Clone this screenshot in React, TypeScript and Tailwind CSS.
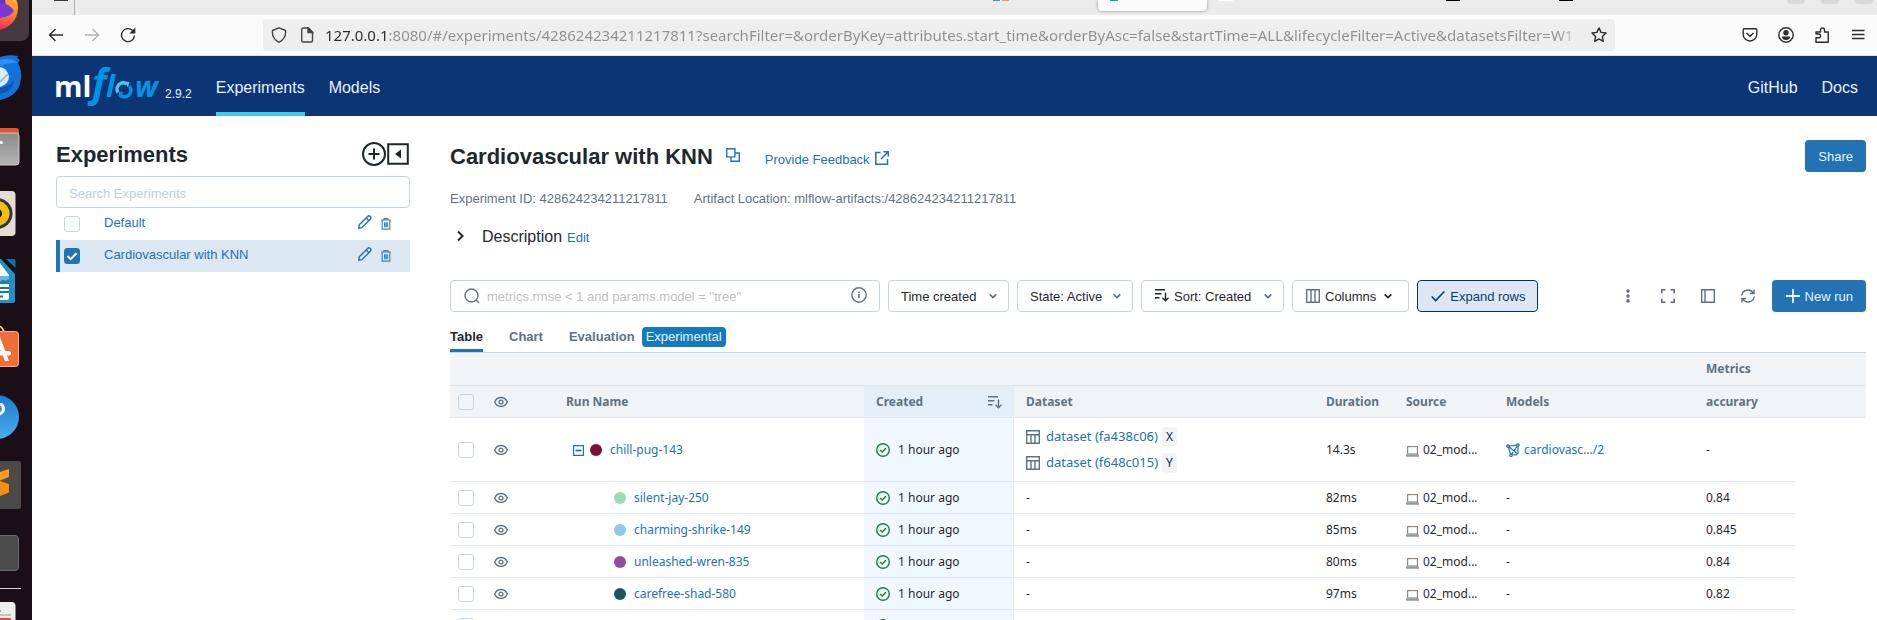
import React, { useState } from "react";

type IconProps = { className?: string; children: React.ReactNode; box?: string };

function Icon({ className = "size-3.5", children, box = "0 0 14 14" }: IconProps) {
  return (
    <svg
      viewBox={box}
      className={`shrink-0 ${className}`}
      fill="none"
      stroke="currentColor"
      strokeWidth="1.4"
      aria-hidden="true"
    >
      {children}
    </svg>
  );
}

const EyeIcon = () => (
  <Icon className="size-3.5 text-[#5f7281]">
    <path d="M.7 7C2 4 4.300 2.500 7 2.500S12 4 13.300 7C12 10 9.700 11.500 7 11.500S2 10 .7 7Z" />
    <circle cx="7" cy="7" r="1.900" />
  </Icon>
);

const SortIcon = ({ className }: { className?: string }) => (
  <Icon className={className}>
    <path d="M0 1.700h10M0 5.700h6.500M0 9.700h4.500M10.500 4.500v8M7.500 9.700l3 3 3-3" />
  </Icon>
);

const ChevronIcon = ({ className = "" }: { className?: string }) => (
  <Icon className={`h-2 w-2 ${className}`} box="0 0 8 8">
    <path d="M.7 2.300 4 5.500l3.300-3.200" strokeWidth="1.700" />
  </Icon>
);

const CheckCircleIcon = () => (
  <Icon className="size-3.5 text-[#277c43]">
    <circle cx="7" cy="7" r="6.300" />
    <path d="M4.200 7.100 6.200 9l3.700-3.700" />
  </Icon>
);

const TableIcon = () => (
  <Icon className="size-3.5 text-[#5f7281]">
    <path d="M.7.7h12.600v12.600H.7zM.7 4.700h12.600M5 4.700v8.600M9 4.700v8.600" />
  </Icon>
);

const LaptopIcon = () => (
  <svg viewBox="0 0 13 11" className="mt-1 h-[11px] w-[13px] shrink-0" aria-hidden="true">
    <rect x="1.600" y=".6" width="9.800" height="7.400" fill="none" stroke="#8c8c8c" strokeWidth="1.200" />
    <path d="M0 8.500h13v1.700q0 .6-.6.6H.6q-.6 0-.6-.6z" fill="#999" />
  </svg>
);

const ModelIcon = () => (
  <Icon className="size-3.5">
    <path d="M3 3 11 2.200M2.200 4l2.500 7.300M3 3.700l8.300 7.100M12 3.200v7.500M11.200 3 5.700 11.200M6.200 12l5.300-.4" strokeWidth="1.200" />
    <circle cx="1.900" cy="3" r="1.200" fill="#fff" strokeWidth="1.200" />
    <circle cx="12" cy="2" r="1.200" fill="#fff" strokeWidth="1.200" />
    <circle cx="5" cy="12.300" r="1.200" fill="#fff" strokeWidth="1.200" />
  </Icon>
);

function Checkbox({ label, checked = false }: { label: string; checked?: boolean }) {
  const [on, setOn] = useState(checked);
  return (
    <span className="grid size-4 shrink-0">
      <input
        type="checkbox"
        aria-label={label}
        checked={on}
        onChange={() => setOn(!on)}
        className="col-start-1 row-start-1 size-4 appearance-none rounded-[3px] border border-[#c5d4e3] checked:border-[#2272b4] checked:bg-[#2272b4]"
      />
      {on && (
        <svg
          viewBox="0 0 16 16"
          className="pointer-events-none col-start-1 row-start-1 size-4"
          fill="none"
          stroke="#fff"
          strokeWidth="2"
          aria-hidden="true"
        >
          <path d="m3.500 8 3.200 3.200L12.500 5.300" />
        </svg>
      )}
    </span>
  );
}

function Dock() {
  return (
    <aside aria-label="Dock" className="flex w-8 shrink-0 flex-col overflow-hidden bg-[#1a0f16]">
      <svg viewBox="0 0 32 48" className="h-12 w-8 shrink-0">
        <defs>
          <linearGradient id="fox" x1=".6" y1="0" x2=".3" y2="1">
            <stop offset="0" stopColor="#ffd43a" />
            <stop offset=".55" stopColor="#ff7a2b" />
            <stop offset="1" stopColor="#f0156d" />
          </linearGradient>
        </defs>
        <rect x="-20" y="-20" width="49" height="61" rx="8" fill="#443a40" />
        <circle cx="-4" cy="8" r="22" fill="url(#fox)" />
        <path d="M0 0h12c4 3 3 11-2 15-3 2-6 3-10 3z" fill="#ff9a2e" />
        <path d="M0 0h5q1.500 8 0 13-2 4-5 5z" fill="#6b2fc8" />
        <path d="M0 3q9 0 14 8-4 6-14 7z" fill="#7b36d6" />
      </svg>
      <svg viewBox="0 48 32 64" className="h-16 w-8 shrink-0">
        <path d="M0 57q8-3 18-1l-1 2 3 2-2 3q4 7 3 16-2 17-21 21z" fill="#1373d9" />
        <path d="M0 60q10-3 18 3-8-1-18 3z" fill="#2a94f0" />
        <path d="M0 67q7 1 9 9 0 8-9 11z" fill="#dcecfb" />
        <path d="m0 82 8-8" stroke="#7fb2e6" strokeWidth="1.500" />
        <path d="M0 88q10-1 14-9 0 12-14 15z" fill="#0c55b5" />
      </svg>
      <svg viewBox="0 112 32 64" className="h-16 w-8 shrink-0">
        <defs>
          <linearGradient id="files" x1="0" y1="0" x2="0" y2="1">
            <stop offset="0" stopColor="#8b8b8b" />
            <stop offset="1" stopColor="#b4b4b4" />
          </linearGradient>
        </defs>
        <rect x="-10" y="128" width="29" height="20" rx="3" fill="#e2552a" />
        <rect x="-10" y="133" width="29" height="32" rx="3" fill="url(#files)" stroke="#c9c9c9" />
        <rect x="-4" y="141" width="7" height="3" rx="1.500" fill="#fff" />
      </svg>
      <svg viewBox="0 176 32 72" className="h-[72px] w-8 shrink-0">
        <rect x="-30" y="191" width="45.500" height="45" rx="4" fill="#e3ddd3" />
        <circle cx="-3" cy="213.500" r="15.500" fill="#35353a" />
        <circle cx="-3" cy="213.500" r="12.500" fill="#f3bf14" />
        <circle cx="-3" cy="213.500" r="5" fill="#1c1810" />
      </svg>
      <svg viewBox="0 248 32 66" className="h-[66px] w-8 shrink-0">
        <path d="M0 259h1l14 15v27q0 2-2 2H0z" fill="#2290c4" />
        <path d="M6 259h8q1.500 0 1.500 1.500V268z" fill="#12719c" />
        <path d="M0 263l9 12v23q0 2-2 2H0z" fill="#fff" />
        <path d="M0 276h9v8H0z" fill="#68b4e3" />
        <path d="M0 282q3-4 5-1l4-2v5H0z" fill="#237fae" />
        <path d="M0 288h9M0 292h9M0 296.500h3" stroke="#15779f" strokeWidth="1.800" />
      </svg>
      <svg viewBox="0 314 32 70" className="h-[70px] w-8 shrink-0">
        <path d="M-3 326q5-1 7.500 7" fill="none" stroke="#f6d9a8" strokeWidth="1.600" />
        <rect x="-10" y="331.500" width="28.500" height="35" rx="3" fill="#ef6d37" stroke="#ffb083" />
        <path d="M0 337l9 24H5l-5-12z" fill="#fff" />
        <rect x="-5" y="351" width="16" height="4.500" rx="2" fill="#fff" />
      </svg>
      <svg viewBox="0 384 32 64" className="h-16 w-8 shrink-0">
        <defs>
          <linearGradient id="help" x1="0" y1="0" x2="0" y2="1">
            <stop offset="0" stopColor="#1c7bd0" />
            <stop offset="1" stopColor="#4cacec" />
          </linearGradient>
        </defs>
        <circle cx="-3" cy="417" r="22" fill="url(#help)" />
        <path d="M-4 406q7-4 7.500 3 0 4-6 6" fill="none" stroke="#fff" strokeWidth="3" />
      </svg>
      <svg viewBox="0 448 32 72" className="h-[72px] w-8 shrink-0">
        <rect x="-20" y="461" width="41" height="48" rx="2" fill="#4a4a4a" />
        <path d="M0 472l9-3v8l-9 3.500z" fill="#ff9a1f" />
        <path d="M0 481l9 3v8.500l-9 3.500z" fill="#f68c12" />
      </svg>
      <svg viewBox="0 520 32 68" className="h-[68px] w-8 shrink-0">
        <rect x="-20" y="535.500" width="38.500" height="35" rx="3.500" fill="#4b4b4b" stroke="#6b6b6b" />
      </svg>
      <hr className="w-[21px] shrink-0 border-t border-[#d5d2d4]" />
      <svg viewBox="0 589 32 40" className="h-10 w-8 shrink-0">
        <rect x="-20" y="602" width="35.500" height="40" rx="4" fill="#eeeeec" />
        <path d="M0 611h1" stroke="#a9a391" strokeWidth="2" />
        <path d="M0 615h11" stroke="#c9c3b4" strokeWidth="2" />
        <path d="M0 618h11v11H0z" fill="#ee4c3c" />
      </svg>
    </aside>
  );
}

function BrowserBar() {
  return (
    <div className="text-[#2b2b2f]">
      <div className="flex h-[15px] items-start overflow-hidden bg-[#ebebeb]">
        <span className="ml-[22px] h-px w-3.5 bg-[#3a3a3a]" />
        <span className="ml-1.5 h-[15px] w-px bg-[#b0b0b0]" />
        <span className="ml-[918px] h-px w-[7px] bg-[#2a9bd6]" />
        <span className="ml-0.5 h-px w-[7px] bg-[#ff9c3a]" />
        <span className="ml-[89px] flex h-[11px] w-[109px] justify-start rounded-b bg-[#fbfbfb] pl-3 shadow-[0_0_3px_rgba(0,0,0,0.45)]">
          <span className="h-px w-2 bg-[#0194e2]" />
        </span>
        <span className="ml-3 h-px w-3.5 bg-white" />
        <span className="ml-auto h-px w-3.5 bg-black" />
        <span className="ml-[99px] h-px w-3.5 bg-black" />
        <div className="mr-1 ml-[214px] flex gap-4">
          <span className="h-1 w-[18px] rounded-b-full bg-[#d9d9d9]" />
          <span className="h-1 w-[18px] rounded-b-full bg-[#d9d9d9]" />
          <span className="h-1 w-[18px] rounded-b-full bg-[#d9d9d9]" />
        </div>
      </div>
      <div className="flex h-[41px] items-center border-b border-[#e0e0e0] bg-[#fbfbfb] pr-[11px] pl-4">
        <div className="flex shrink-0 items-center gap-5">
          <button aria-label="Back" className="size-4">
            <Icon className="size-4" box="0 0 16 16">
              <path d="M15 8H1.500M7.500 2 1.500 8l6 6" />
            </Icon>
          </button>
          <button aria-label="Forward" className="size-4 text-[#b0b0b0]">
            <Icon className="size-4" box="0 0 16 16">
              <path d="M1 8h13.500M8.500 2l6 6-6 6" />
            </Icon>
          </button>
          <button aria-label="Reload" className="size-4">
            <Icon className="size-4" box="0 0 16 16">
              <path d="M14.500 8.500a6.500 6.500 0 1 1-1.900-5" />
              <path d="M15.300.5v6h-6z" fill="currentColor" stroke="none" />
            </Icon>
          </button>
        </div>
        <div className="ml-[127px] flex h-8 min-w-0 flex-1 items-center rounded bg-[#eeeeee] px-2">
          <Icon className="size-4 text-[#45454a]" box="0 0 16 16">
            <path d="M8 .8 14.500 3.500Q15.500 11.500 8 15.300.5 11.500 1.500 3.500Z" strokeLinejoin="round" />
          </Icon>
          <Icon className="ml-3 size-4 text-[#45454a]" box="0 0 16 16">
            <path d="M2.700 2.500q0-1.500 1.500-1.500H9.500L13.500 5v8.500q0 1.500-1.500 1.500H4.200q-1.500 0-1.500-1.500z" />
            <path d="M9 1v4.500h4.500z" fill="currentColor" />
          </Icon>
          <input
            aria-label="Address"
            readOnly
            value="127.0.0.1:8080/#/experiments/428624234211217811?searchFilter=&orderByKey=attributes.start_time&orderByAsc=false&startTime=ALL&lifecycleFilter=Active&datasetsFilter=W1"
            className="ml-2.5 min-w-0 flex-1 bg-[linear-gradient(90deg,#2b2b2f_63px,#8f8f91_63px,#8f8f91_calc(100%-30px),transparent_calc(100%-4px))] bg-clip-text font-['Noto_Sans',sans-serif] text-[15px] text-transparent outline-none"
          />
          <button aria-label="Bookmark this page" className="ml-1 size-4">
            <Icon className="size-4" box="0 0 16 16">
              <path
                d="m8 .9 2.100 4.500 4.900.6-3.600 3.400.9 4.900L8 11.900l-4.300 2.400.9-4.900L1 6l4.900-.6z"
                strokeLinejoin="round"
              />
            </Icon>
          </button>
        </div>
        <div className="ml-[127px] flex shrink-0 items-center gap-5">
          <button aria-label="Save to Pocket" className="size-4">
            <Icon className="size-4" box="0 0 16 16">
              <path d="M1.200 3q0-1.200 1.200-1.200h11.200q1.200 0 1.200 1.200v4.500a6.800 6.500 0 0 1-13.600 0zM4.500 6 8 9.300 11.500 6" />
            </Icon>
          </button>
          <button aria-label="Account" className="size-4">
            <Icon className="size-4" box="0 0 16 16">
              <circle cx="8" cy="8" r="7.200" />
              <circle cx="8" cy="5.800" r="2.700" fill="currentColor" stroke="none" />
              <path d="M3.800 9.500h8.400q-.5 3.500-4.200 3.500t-4.200-3.500z" fill="currentColor" stroke="none" />
            </Icon>
          </button>
          <button aria-label="Extensions" className="size-4">
            <Icon className="size-4" box="0 0 16 16">
              <path d="M2 15.200v-4.500h2.300a1.900 1.900 0 1 0 0-3.700H2V5h4.500V3a2 2 0 1 1 4 0v2h3.700v10.200z" strokeLinejoin="round" />
            </Icon>
          </button>
          <button aria-label="Application menu" className="size-4">
            <Icon className="size-4" box="0 0 16 16">
              <path d="M2 3.500h12.500M2 7.500h12.500M2 11.500h12.500" />
            </Icon>
          </button>
        </div>
      </div>
    </div>
  );
}

function Logo() {
  return (
    <svg viewBox="0 0 106 44" className="h-11 w-[106px] shrink-0 overflow-visible" role="img" aria-label="mlflow">
      <g fontFamily="'Open Sans', sans-serif">
        <text x="-2" y="33" fontSize="29" fontWeight="700" fill="#fff">ml</text>
        <g fill="#0194e2" fontStyle="italic" fontWeight="700">
          <text x="36" y="33" fontSize="39">f</text>
          <text x="50" y="33" fontSize="30">l</text>
          <text x="79" y="33" fontSize="29">w</text>
        </g>
      </g>
      <path d="M62 28.500a6.300 6.300 0 0 1 9-8.500" fill="none" stroke="#43c9ed" strokeWidth="3.500" />
      <path d="M63.500 30.300a6.300 6.300 0 0 0 10-8" fill="none" stroke="#0194e2" strokeWidth="3.500" />
      <path d="m69 17.500 4.500.5-1.500 5.500z" fill="#43c9ed" />
      <path d="m67.500 28-5-.5 1 5.500z" fill="#0194e2" />
    </svg>
  );
}

function AppHeader() {
  return (
    <header className="flex h-15 items-stretch bg-[#0b3574] pr-[19px] pl-6 text-base text-[#e7f1fb]">
      <div className="flex items-center">
        <Logo />
        <span className="mt-4 ml-[3px] text-[12px]">2.9.2</span>
      </div>
      <nav className="ml-6 flex flex-1 items-stretch gap-6">
        <a href="#/experiments" className="flex items-center border-b-4 border-[#43c9ed] pt-2">
          Experiments
        </a>
        <a href="#/models" className="flex items-center pt-1">
          Models
        </a>
        <div className="ml-auto flex items-center gap-6 pt-1">
          <a href="#github">GitHub</a>
          <a href="#docs">Docs</a>
        </div>
      </nav>
    </header>
  );
}

function ExperimentItem({ name, selected = false }: { name: string; selected?: boolean }) {
  return (
    <li
      className={`flex h-8 items-center border-l-4 pr-[18px] pl-1 ${
        selected ? "border-[#2272b4] bg-[#dbe7f3]" : "border-transparent"
      }`}
    >
      <Checkbox label={`Select ${name}`} checked={selected} />
      <a href="#/experiments" className="ml-6 flex-1 pb-0.5 text-[#2272b4]">
        {name}
      </a>
      <button aria-label={`Rename ${name}`} className="mb-1 text-[#2272b4]">
        <Icon>
          <path d="M.8 13.200 1.300 9.800 9.700 1.400q1.300-1.200 2.600 0t0 2.800L4 12.600zM8.200 3l2.700 2.700" strokeLinejoin="round" />
        </Icon>
      </button>
      <button aria-label={`Delete ${name}`} className="ml-[9px] pr-px text-[#3f85bf]">
        <Icon className="h-3 w-2.5" box="0 0 10 12">
          <path d="M0 2h10M3 2V.6h4V2M1.200 2v9.200h7.600V2M3.600 4.200v5M5 4.200v5M6.400 4.200v5" strokeWidth="1.200" />
        </Icon>
      </button>
    </li>
  );
}

function Sidebar() {
  return (
    <aside className="w-[354px] shrink-0">
      <div className="flex h-7 items-center justify-between pr-px">
        <h2 className="text-[22px] font-bold">Experiments</h2>
        <div className="flex items-center">
          <button aria-label="New experiment">
            <Icon className="size-6" box="0 0 24 24">
              <circle cx="12" cy="12" r="11" strokeWidth="2" />
              <path d="M12 6.500v11M6.500 12h11" strokeWidth="2" />
            </Icon>
          </button>
          <button aria-label="Collapse sidebar" className="ml-px">
            <Icon className="size-[22px]" box="0 0 22 22">
              <path d="M1.200 1.200h19.600v19.600H1.200z" strokeWidth="2" />
              <path d="M14 6.500v9L8 11z" fill="currentColor" stroke="none" />
            </Icon>
          </button>
        </div>
      </div>
      <input
        type="search"
        aria-label="Search Experiments"
        placeholder="Search Experiments"
        className="mt-2 block h-8 w-full rounded border border-[#c5d4e3] px-3 pt-0.5 text-[13px] placeholder:text-[#bfcedb]"
      />
      <ul>
        <ExperimentItem name="Default" />
        <ExperimentItem name="Cardiovascular with KNN" selected />
      </ul>
    </aside>
  );
}

function Dropdown({ label, width, icon }: { label: string; width: string; icon?: React.ReactNode }) {
  return (
    <div className={`relative h-8 shrink-0 ${width}`}>
      <select
        aria-label={label}
        className={`h-full w-full appearance-none rounded border border-[#c5d4e3] bg-white pt-0.5 ${icon ? "pl-8" : "pl-3"}`}
      >
        <option>{label}</option>
      </select>
      {icon && <span className="pointer-events-none absolute top-2 left-3.5">{icon}</span>}
      <ChevronIcon className="pointer-events-none absolute top-3 right-3 text-[#5f7281]" />
    </div>
  );
}

function Toolbar() {
  return (
    <div className="flex items-center gap-2">
      <label className="flex h-8 w-[430px] items-center gap-1.5 rounded border border-[#c5d4e3] px-3">
        <Icon className="ml-px size-4 text-[#5f7281]" box="0 0 16 16">
          <circle cx="7.500" cy="7.500" r="6.500" />
          <path d="m12 12 3 3" />
        </Icon>
        <input
          type="text"
          aria-label="Search runs"
          placeholder={'metrics.rmse < 1 and params.model = "tree"'}
          className="min-w-0 flex-1 pt-0.5 pl-px outline-none placeholder:text-[#bfbfbf]"
        />
        <Icon className="mb-0.5 size-4 text-[#5f7281]" box="0 0 16 16">
          <circle cx="8" cy="8" r="7.200" />
          <path d="M8 7v4.200M8 4.600v1.500" strokeWidth="1.600" />
        </Icon>
      </label>
      <Dropdown label="Time created" width="w-[121px]" />
      <Dropdown label="State: Active" width="w-[116px]" />
      <Dropdown label="Sort: Created" width="w-[143px]" icon={<SortIcon />} />
      <button className="flex h-8 items-center rounded border border-[#c5d4e3] pr-4 pl-[13px]">
        <Icon className="size-3.5 text-[#5f7281]">
          <path d="M.7.7h12.600v12.600H.7zM5 .7v12.600M9 .7v12.600" />
        </Icon>
        <span className="mt-0.5 ml-[5px]">Columns</span>
        <ChevronIcon className="ml-2" />
      </button>
      <button className="flex h-8 items-center rounded border border-[#04355d] bg-[#dbe7f3] px-3 pl-[13px] text-[#0e3d66]">
        <Icon>
          <path d="m.7 7.500 4 4 8.600-9" strokeWidth="1.600" />
        </Icon>
        <span className="mt-0.5 ml-[5px]">Expand rows</span>
      </button>
      <div className="ml-auto flex shrink-0 items-center gap-2 text-[#5f7281]">
        <button aria-label="More options" className="grid size-8 place-items-center">
          <Icon>
            <path
              d="M7 .3a1.800 1.800 0 1 1 0 3.600a1.800 1.800 0 1 1 0-3.600M7 5.200a1.800 1.800 0 1 1 0 3.600a1.800 1.800 0 1 1 0-3.600M7 10.100a1.800 1.800 0 1 1 0 3.600a1.800 1.800 0 1 1 0-3.600"
              fill="currentColor"
              stroke="none"
            />
          </Icon>
        </button>
        <button aria-label="Full screen" className="grid size-8 place-items-center">
          <Icon>
            <path d="M.8 4.500V.8h3.700M9.500.8h3.700v3.700M13.200 9.500v3.700H9.500M4.500 13.200H.8V9.500" strokeWidth="1.600" />
          </Icon>
        </button>
        <button aria-label="Toggle side panel" className="grid size-8 place-items-center">
          <Icon>
            <path d="M.7.7h12.600v12.600H.7zM4 .7v12.600" />
          </Icon>
        </button>
        <button aria-label="Refresh" className="grid size-8 place-items-center">
          <Icon>
            <path d="M.8 6.500a6.200 6 0 0 1 11.400-2.700M13.200 7.500a6.200 6 0 0 1-11.400 2.700M13 .5v4H9M1 13.500v-4h4" />
          </Icon>
        </button>
        <button className="flex h-8 items-center rounded bg-[#2272b4] pr-[13px] pl-3.5 text-[#e7f1fb]">
          <Icon>
            <path d="M7 0v14M0 7h14" strokeWidth="1.800" />
          </Icon>
          <span className="mt-0.5 ml-[5px]">New run</span>
        </button>
      </div>
    </div>
  );
}

type Run = { name: string; color: string; duration: string; accuracy: string; parent?: boolean };

const runs: Run[] = [
  { name: "chill-pug-143", color: "bg-[#7d1135]", duration: "14.3s", accuracy: "-", parent: true },
  { name: "silent-jay-250", color: "bg-[#99ddb4]", duration: "82ms", accuracy: "0.84" },
  { name: "charming-shrike-149", color: "bg-[#8acae7]", duration: "85ms", accuracy: "0.845" },
  { name: "unleashed-wren-835", color: "bg-[#914b9f]", duration: "80ms", accuracy: "0.84" },
  { name: "carefree-shad-580", color: "bg-[#1d5365]", duration: "97ms", accuracy: "0.82" },
  { name: "", color: "bg-[#cf7d4e]", duration: "", accuracy: "" },
];

function DatasetLink({ digest, tag }: { digest: string; tag: string }) {
  return (
    <div className="flex h-5 items-center">
      <TableIcon />
      <a href="#dataset" className="ml-1.5 text-[13px] text-[#2272b4]">
        dataset ({digest})
      </a>
      <span className="ml-1 rounded bg-[#f2f3f5] px-1 leading-5">{tag}</span>
    </div>
  );
}

function RunRow({ run }: { run: Run }) {
  const cell = "border-b border-[#e0e7ee] px-3";
  return (
    <tr className={run.parent ? "h-16" : "h-8"}>
      <td className="border-b border-[#e0e7ee] pl-2">
        <Checkbox label={`Select ${run.name}`} />
      </td>
      <td className="border-b border-[#e0e7ee] pl-1">
        <EyeIcon />
      </td>
      <td className={cell}>
        <div className={`flex items-center ${run.parent ? "pl-[7px]" : "pl-12"}`}>
          {run.parent && (
            <button aria-label="Collapse child runs" className="mt-px mr-1.5 text-[#2272b4]">
              <Icon className="size-[11px]" box="0 0 11 11">
                <path d="M.6.6h9.800v9.800H.6z" strokeWidth="1.200" />
                <path d="M2.500 5.500h6" strokeWidth="1.800" />
              </Icon>
            </button>
          )}
          <span className={`size-3 rounded-full ${run.color}`} />
          <a href="#run" className="ml-2 text-[#2272b4]">
            {run.name}
          </a>
        </div>
      </td>
      <td className={`${cell} border-r bg-[#f0f8ff]`}>
        <div className="flex items-center gap-2">
          <CheckCircleIcon />
          {run.duration && "1 hour ago"}
        </div>
      </td>
      <td className={cell}>
        {run.parent ? (
          <div className="flex flex-col gap-1.5">
            <DatasetLink digest="fa438c06" tag="X" />
            <DatasetLink digest="f648c015" tag="Y" />
          </div>
        ) : (
          run.duration && "-"
        )}
      </td>
      <td className={cell}>{run.duration}</td>
      <td className={cell}>
        <div className="flex items-center gap-1">
          <LaptopIcon />
          {run.duration && "02_mod..."}
        </div>
      </td>
      <td className={cell}>
        {run.parent ? (
          <a href="#model" className="flex items-center gap-1 text-[#2272b4]">
            <ModelIcon />
            cardiovasc.../2
          </a>
        ) : (
          run.duration && "-"
        )}
      </td>
      <td className={cell}>{run.accuracy}</td>
      <td />
    </tr>
  );
}

function RunsTable() {
  const head = "border-b border-[#e0e7ee] px-3 text-left font-bold";
  return (
    <table className="w-full table-fixed border-separate border-spacing-0 font-['Noto_Sans',sans-serif] text-[12px] text-[#1f272d]">
      <colgroup>
        <col className="w-10" />
        <col className="w-16" />
        <col className="w-[310px]" />
        <col className="w-[150px]" />
        <col className="w-[300px]" />
        <col className="w-20" />
        <col className="w-[100px]" />
        <col className="w-[200px]" />
        <col className="w-[100px]" />
        <col />
      </colgroup>
      <thead className="bg-[#f1f4f7] text-[#5f7281]">
        <tr className="h-[33px]">
          <th colSpan={8} className={head} />
          <th colSpan={2} className={head}>
            Metrics
          </th>
        </tr>
        <tr className="h-8">
          <th className="border-b border-[#e0e7ee] pl-2">
            <Checkbox label="Select all runs" />
          </th>
          <th className="border-b border-[#e0e7ee] pl-1">
            <EyeIcon />
          </th>
          <th className={head}>Run Name</th>
          <th className={`${head} bg-[#e3eef8]`}>
            <div className="flex items-center justify-between">
              Created
              <SortIcon />
            </div>
          </th>
          <th className={head}>Dataset</th>
          <th className={head}>Duration</th>
          <th className={head}>Source</th>
          <th className={head}>Models</th>
          <th className={head}>accurary</th>
          <th className={head} />
        </tr>
      </thead>
      <tbody>
        {runs.map((run) => (
          <RunRow key={run.name} run={run} />
        ))}
      </tbody>
    </table>
  );
}

function ExperimentPage() {
  return (
    <main className="min-w-0 flex-1">
      <div className="flex h-8 items-center">
        <h1 className="text-[22px] font-bold">Cardiovascular with KNN</h1>
        <button aria-label="Copy experiment name" className="mb-0.5 ml-[13px] text-[#2272b4]">
          <Icon>
            <path d="M.7.7h8.200v8.200H.7zM5 9v4.300h8.300V5H9" />
          </Icon>
        </button>
        <a href="#feedback" className="mt-2 ml-[25px] flex items-center gap-[5px] text-[#2272b4]">
          Provide Feedback
          <Icon className="mb-1 size-3.5">
            <path d="M5.500 1.500H.8v11.800h11.700V8M8.500.8h4.800v4.800M13 1 6 8" strokeWidth="1.500" />
          </Icon>
        </a>
        <button className="ml-auto h-8 rounded bg-[#2272b4] px-[13px] pt-0.5 text-[#e7f1fb]">Share</button>
      </div>
      <div className="mt-4 flex h-5 items-center gap-[26px] pt-0.5 text-[#5f7281]">
        <span>Experiment ID: 428624234211217811</span>
        <span>Artifact Location: mlflow-artifacts:/428624234211217811</span>
      </div>
      <div className="mt-4 flex h-6 items-center">
        <button aria-label="Show description" className="ml-[5px]">
          <Icon className="size-3" box="0 0 12 12">
            <path d="m3 1.500 4.500 4.500L3 10.500" strokeWidth="2" />
          </Icon>
        </button>
        <span className="mt-px ml-[15px] text-base">Description</span>
        <button className="mt-1 ml-[5px] text-[#2272b4]">Edit</button>
      </div>
      <div className="mt-8">
        <Toolbar />
      </div>
      <div role="tablist" className="mt-2 flex h-[33px] items-stretch border-b border-[#c5d4e3] font-bold text-[#5f7281]">
        <button role="tab" aria-selected="true" className="border-b-[3px] border-[#2272b4] pt-1 text-[#1f272d]">
          Table
        </button>
        <button role="tab" aria-selected="false" className="ml-[26px] pt-px">
          Chart
        </button>
        <button role="tab" aria-selected="false" className="ml-[26px] flex items-center gap-[7px] pt-px">
          Evaluation
          <span className="rounded bg-[#147abc] px-1 leading-5 font-normal text-[#e7f1fb]">Experimental</span>
        </button>
      </div>
      <RunsTable />
    </main>
  );
}

export default function App() {
  return (
    <div className="flex h-screen overflow-hidden bg-white font-['Liberation_Sans',Arial,sans-serif] text-[13px] text-[#1f272d]">
      <Dock />
      <div className="min-w-0 flex-1">
        <BrowserBar />
        <AppHeader />
        <div className="flex gap-10 pt-6 pr-[11px] pl-6">
          <Sidebar />
          <ExperimentPage />
        </div>
      </div>
    </div>
  );
}
